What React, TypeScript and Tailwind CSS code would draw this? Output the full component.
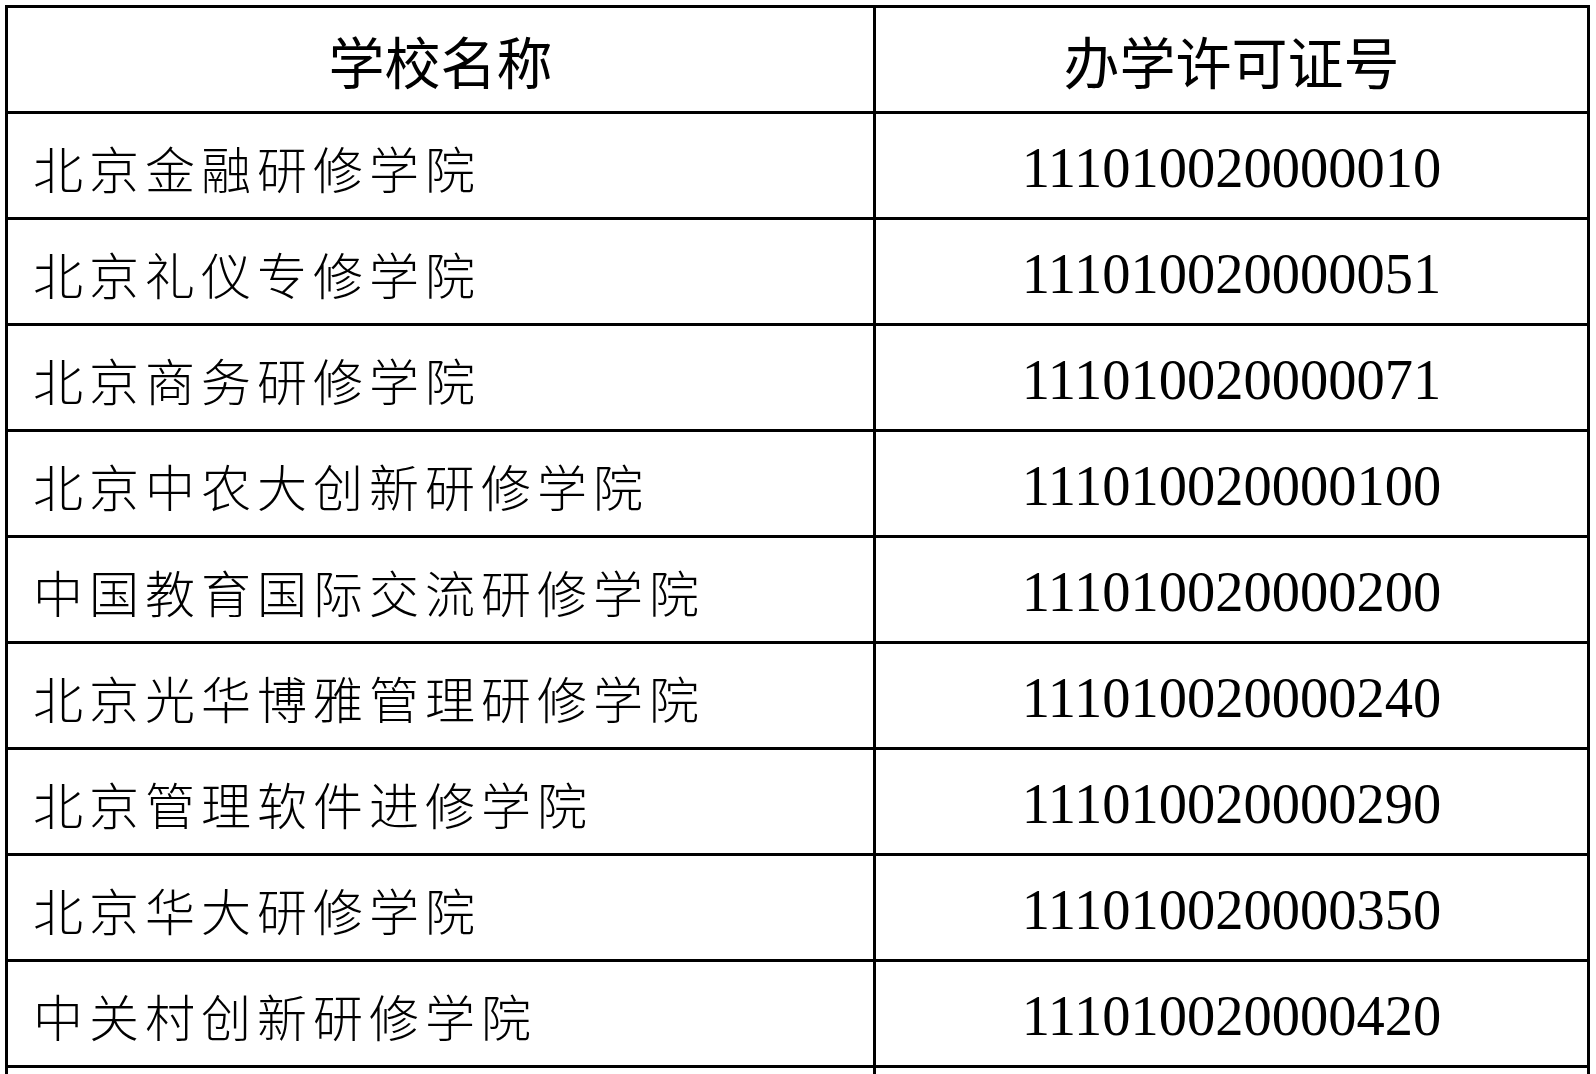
const schools: [string, string][] = [
  ['北京金融研修学院', '111010020000010'],
  ['北京礼仪专修学院', '111010020000051'],
  ['北京商务研修学院', '111010020000071'],
  ['北京中农大创新研修学院', '111010020000100'],
  ['中国教育国际交流研修学院', '111010020000200'],
  ['北京光华博雅管理研修学院', '111010020000240'],
  ['北京管理软件进修学院', '111010020000290'],
  ['北京华大研修学院', '111010020000350'],
  ['中关村创新研修学院', '111010020000420'],
];

const cjk = "font-['Noto_Sans_CJK_SC','Noto_Sans',sans-serif]";

export default function App() {
  return (
    <div className="min-h-screen bg-white pl-[5px] pt-[5px]">
      <div className="grid w-fit grid-cols-[865px_711px] gap-[3px] bg-black p-[3px] text-black">
        <div className={`flex h-[103px] items-center justify-center bg-white text-[56px] leading-none ${cjk}`}>
          学校名称
        </div>
        <div className={`flex h-[103px] items-center justify-center bg-white text-[56px] leading-none ${cjk}`}>
          办学许可证号
        </div>

        {schools.map(([name, code]) => (
          <div key={code} className="contents">
            <div
              className={`flex h-[103px] items-center bg-white pl-[25px] pt-[2px] text-[50px] font-light leading-none tracking-[6px] ${cjk}`}
            >
              {name}
            </div>
            <div className="flex h-[103px] items-center justify-center bg-white pt-[5px] font-['Liberation_Serif','Times_New_Roman',serif] text-[56.5px] leading-none">
              {code}
            </div>
          </div>
        ))}

        {/* next row continues below the fold */}
        <div className="h-[103px] bg-white" />
        <div className="h-[103px] bg-white" />
      </div>
    </div>
  );
}
